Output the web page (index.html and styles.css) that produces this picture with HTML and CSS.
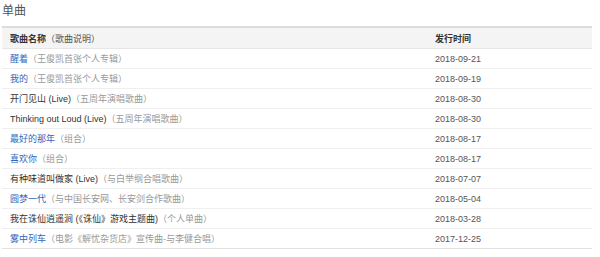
FILE: index.html
```html
<!DOCTYPE html>
<html>
<head>
<meta charset="utf-8">
<link rel="stylesheet" href="styles.css">
</head>
<body>
<div class="page">
  <h2 class="title">单曲</h2>
  <table class="songs">
    <thead>
      <tr><th class="name">歌曲名称<span class="hint">（歌曲说明）</span></th><th class="date">发行时间</th></tr>
    </thead>
    <tbody>
      <tr><td><a class="link">醒着</a><span class="desc">（王俊凯首张个人专辑）</span></td><td class="date">2018-09-21</td></tr>
      <tr><td><a class="link">我的</a><span class="desc">（王俊凯首张个人专辑）</span></td><td class="date">2018-09-19</td></tr>
      <tr><td><span class="plain">开门见山 (Live)</span><span class="desc">（五周年演唱歌曲）</span></td><td class="date">2018-08-30</td></tr>
      <tr><td><span class="plain">Thinking out Loud (Live)</span><span class="desc">（五周年演唱歌曲）</span></td><td class="date">2018-08-30</td></tr>
      <tr><td><a class="link">最好的那年</a><span class="desc">（组合）</span></td><td class="date">2018-08-17</td></tr>
      <tr><td><a class="link">喜欢你</a><span class="desc">（组合）</span></td><td class="date">2018-08-17</td></tr>
      <tr><td><span class="plain">有种味道叫做家 (Live)</span><span class="desc">（与白举纲合唱歌曲）</span></td><td class="date">2018-07-07</td></tr>
      <tr><td><a class="link">圆梦一代</a><span class="desc">（与中国长安网、长安剑合作歌曲）</span></td><td class="date">2018-05-04</td></tr>
      <tr><td><span class="plain">我在诛仙逍遥涧 (《诛仙》游戏主题曲)</span><span class="desc">（个人单曲）</span></td><td class="date">2018-03-28</td></tr>
      <tr><td><a class="link">雾中列车</a><span class="desc">（电影《解忧杂货店》宣传曲-与李健合唱）</span></td><td class="date">2017-12-25</td></tr>
    </tbody>
  </table>
</div>
</body>
</html>
```

FILE: styles.css
```css
html, body {
  margin: 0;
  padding: 0;
  background: #fff;
}
.page {
  padding: 3px 8px 0 2px;
  font-family: "Liberation Sans", Arial, "Noto Sans CJK SC", sans-serif;
  color: #333;
}
.title {
  margin: 0;
  font-size: 12px;
  font-weight: normal;
  line-height: 16px;
  color: #555;
}
.songs {
  margin-top: 7px;
  width: 590px;
  border-collapse: collapse;
  font-size: 9px;
  border-top: 2px solid #dcdcdc;
  border-bottom: 1px solid #e2e2e2;
}
.songs th {
  background: #f4f4f4;
  text-align: left;
  font-weight: bold;
  height: 20px;
  padding: 0 0 0 8px;
  color: #333;
  border-bottom: 1px solid #e6e6e6;
}
.songs th .hint {
  font-weight: normal;
  color: #555;
}
.songs td {
  height: 19px;
  padding: 0 0 0 8px;
  border-top: 1px solid #efefef;
  white-space: nowrap;
}
.songs .date {
  width: 157px;
  color: #555;
}
.songs th.date {
  color: #333;
}
.link {
  color: #3366bb;
  text-decoration: none;
}
.plain {
  color: #333;
}
.desc {
  color: #999;
}
```
